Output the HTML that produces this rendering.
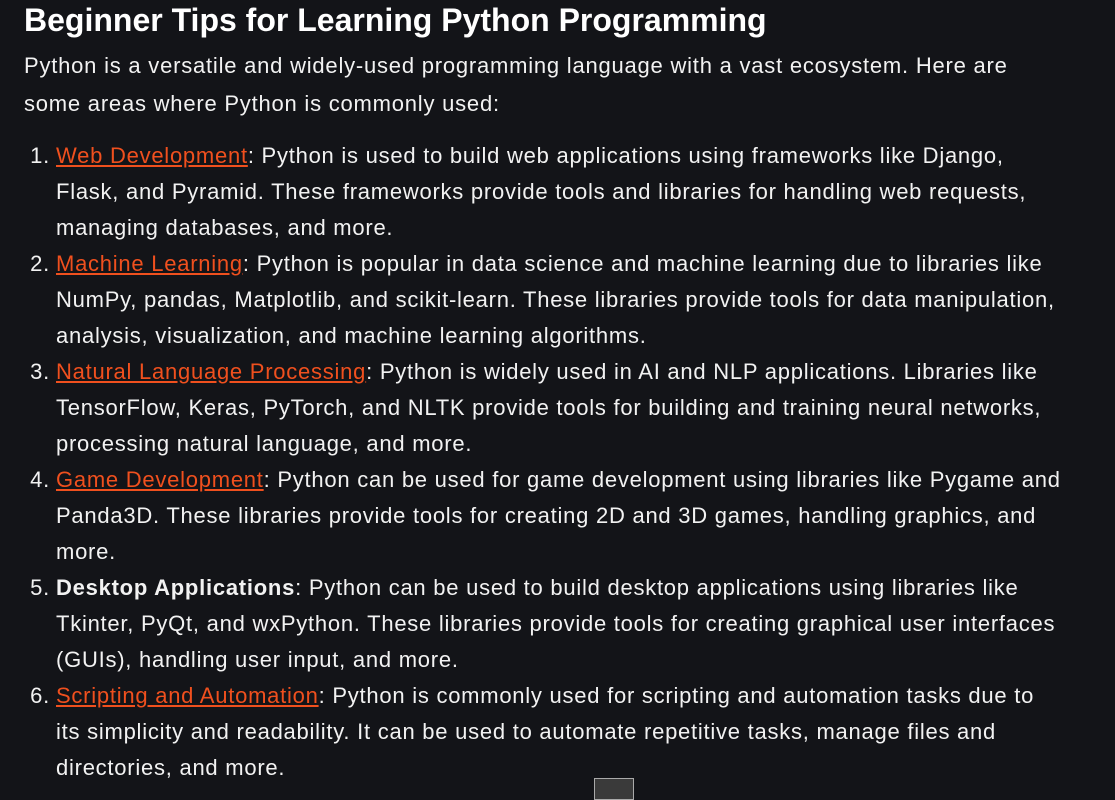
<html><head><style>
body{margin:0;background:#131418;width:1115px;height:790px;overflow:hidden;font-family:"Liberation Sans",sans-serif;color:#f2f2f2}
h1{position:absolute;left:24px;top:0;margin:0;font-size:32px;line-height:40px;font-weight:bold;color:#fff}
p{position:absolute;left:24px;top:47px;margin:0;font-size:22px;line-height:38px;letter-spacing:.78px;white-space:nowrap}
ol{position:absolute;left:56px;top:138px;margin:0;padding:0;font-size:22px;line-height:36px;letter-spacing:.75px;white-space:nowrap}
li{list-style:none;position:relative}
li span.n{position:absolute;right:100%;margin-right:6px}
a{color:#f0501e;text-decoration:underline}
.box{position:absolute;left:594px;top:778px;width:38px;height:20px;background:#3a3a3a;border:1px solid #aaa}
</style></head><body>
<h1>Beginner Tips for Learning Python Programming</h1>
<p>Python is a versatile and widely-used programming language with a vast ecosystem. Here are<br>some areas where Python is commonly used:</p>
<ol>
<li><span class="n">1.</span><a>Web Development</a>: Python is used to build web applications using frameworks like Django,<br>Flask, and Pyramid. These frameworks provide tools and libraries for handling web requests,<br>managing databases, and more.</li>
<li><span class="n">2.</span><a>Machine Learning</a>: Python is popular in data science and machine learning due to libraries like<br>NumPy, pandas, Matplotlib, and scikit-learn. These libraries provide tools for data manipulation,<br>analysis, visualization, and machine learning algorithms.</li>
<li><span class="n">3.</span><a>Natural Language Processing</a>: Python is widely used in AI and NLP applications. Libraries like<br>TensorFlow, Keras, PyTorch, and NLTK provide tools for building and training neural networks,<br>processing natural language, and more.</li>
<li><span class="n">4.</span><a>Game Development</a>: Python can be used for game development using libraries like Pygame and<br>Panda3D. These libraries provide tools for creating 2D and 3D games, handling graphics, and<br>more.</li>
<li><span class="n">5.</span><b>Desktop Applications</b>: Python can be used to build desktop applications using libraries like<br>Tkinter, PyQt, and wxPython. These libraries provide tools for creating graphical user interfaces<br>(GUIs), handling user input, and more.</li>
<li><span class="n">6.</span><a>Scripting and Automation</a>: Python is commonly used for scripting and automation tasks due to<br>its simplicity and readability. It can be used to automate repetitive tasks, manage files and<br>directories, and more.</li>
</ol>
<div class="box"></div>
</body></html>
